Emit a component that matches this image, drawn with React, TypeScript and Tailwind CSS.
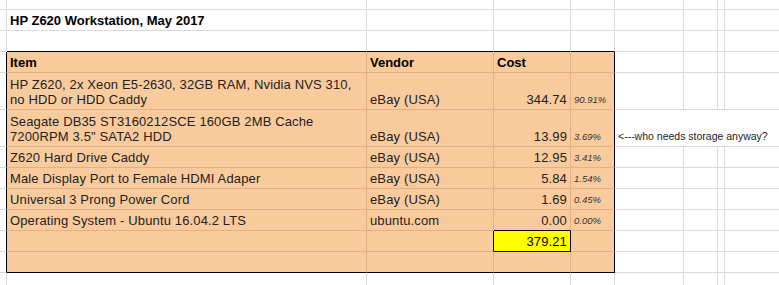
import React from "react";

const grid =
  "grid grid-cols-[7px_360px_127px_77px_44px_69px_34px_7px_1fr] text-[13px] tracking-[0.14px] text-[#222]";
const base =
  "flex items-end overflow-visible whitespace-nowrap border-r border-b px-[3px] pb-[2px] leading-[15px]";
const plain = "border-[#dadada]";
const orange = "bg-[#f9cb9c] border-[#e2b085]";

type Item = {
  item: string[];
  vendor: string;
  cost: string;
  pct: string;
  note?: string;
};

const items: Item[] = [
  {
    item: ["HP Z620, 2x Xeon E5-2630, 32GB RAM, Nvidia NVS 310,", "no HDD or HDD Caddy"],
    vendor: "eBay (USA)",
    cost: "344.74",
    pct: "90.91%",
  },
  {
    item: ["Seagate DB35 ST3160212SCE 160GB 2MB Cache", '7200RPM 3.5" SATA2 HDD'],
    vendor: "eBay (USA)",
    cost: "13.99",
    pct: "3.69%",
    note: "<---who needs storage anyway?",
  },
  { item: ["Z620 Hard Drive Caddy"], vendor: "eBay (USA)", cost: "12.95", pct: "3.41%" },
  { item: ["Male Display Port to Female HDMI Adaper"], vendor: "eBay (USA)", cost: "5.84", pct: "1.54%" },
  { item: ["Universal 3 Prong Power Cord"], vendor: "eBay (USA)", cost: "1.69", pct: "0.45%" },
  { item: ["Operating System - Ubuntu 16.04.2 LTS"], vendor: "ubuntu.com", cost: "0.00", pct: "0.00%" },
];

function Cell({ className = "", children }: { className?: string; children?: React.ReactNode }) {
  return <div className={`${base} ${className}`}>{children}</div>;
}

function PlainTail() {
  return (
    <>
      <Cell className={plain} />
      <Cell className={plain} />
      <Cell className={plain} />
      <Cell className={`${plain} border-r-0`} />
    </>
  );
}

export default function App() {
  return (
    <div className="h-[285px] w-[779px] overflow-hidden bg-white font-['Liberation_Sans',Arial,sans-serif]">
      {/* top partial row */}
      <div className={`${grid} h-[10px]`}>
        <Cell className={plain} />
        <Cell className={plain} />
        <Cell className={plain} />
        <Cell className={plain} />
        <Cell className={plain} />
        <PlainTail />
      </div>

      {/* title */}
      <div className={`${grid} h-[21px]`}>
        <Cell className={plain} />
        <Cell className={`${plain} font-bold tracking-normal text-black`}>HP Z620 Workstation, May 2017</Cell>
        <Cell className={plain} />
        <Cell className={plain} />
        <Cell className={plain} />
        <PlainTail />
      </div>

      {/* blank row above table */}
      <div className={`${grid} h-[21px]`}>
        <Cell className={plain} />
        <Cell className={`${plain} border-b-black`} />
        <Cell className={`${plain} border-b-black`} />
        <Cell className={`${plain} border-b-black`} />
        <Cell className={`${plain} border-b-black`} />
        <PlainTail />
      </div>

      {/* header */}
      <div className={`${grid} h-[21px]`}>
        <Cell className={`${plain} border-r-black`} />
        <Cell className={`${orange} font-bold tracking-normal text-black`}>Item</Cell>
        <Cell className={`${orange} font-bold tracking-normal text-black`}>Vendor</Cell>
        <Cell className={`${orange} font-bold tracking-normal text-black`}>Cost</Cell>
        <Cell className={`${orange} border-r-black`} />
        <PlainTail />
      </div>

      {items.map((r, i) => (
        <div key={i} className={`${grid} ${r.item.length > 1 ? "h-[37px]" : "h-[21px]"}`}>
          <Cell className={`${plain} border-r-black`} />
          <Cell className={orange}>
            <div>
              {r.item.map((line, j) => (
                <div key={j}>{line}</div>
              ))}
            </div>
          </Cell>
          <Cell className={orange}>{r.vendor}</Cell>
          <Cell className={`${orange} justify-end ${i === items.length - 1 ? "border-b-black" : ""}`}>
            {r.cost}
          </Cell>
          <Cell className={`${orange} border-r-black text-[9.5px] italic leading-[10px] tracking-normal text-[#333]`}>
            {r.pct}
          </Cell>
          {r.note ? (
            <div className={`${base} ${plain} col-span-4 border-r-0 text-[10.5px] leading-[10px] tracking-normal`}>
              {r.note}
            </div>
          ) : (
            <PlainTail />
          )}
        </div>
      ))}

      {/* total */}
      <div className={`${grid} h-[21px]`}>
        <Cell className={`${plain} border-r-black`} />
        <Cell className={orange} />
        <Cell className={`${orange} border-r-black`} />
        <Cell className="justify-end border-r-black border-b-black bg-[#ffff00] text-black">379.21</Cell>
        <Cell className={`${orange} border-r-black`} />
        <PlainTail />
      </div>

      {/* blank bottom table row */}
      <div className={`${grid} h-[21px]`}>
        <Cell className={`${plain} border-r-black`} />
        <Cell className={`${orange} border-b-black`} />
        <Cell className={`${orange} border-b-black`} />
        <Cell className={`${orange} border-b-black`} />
        <Cell className={`${orange} border-r-black border-b-black`} />
        <PlainTail />
      </div>

      {/* below */}
      <div className={`${grid} h-[13px]`}>
        <Cell className={plain} />
        <Cell className={plain} />
        <Cell className={plain} />
        <Cell className={plain} />
        <Cell className={plain} />
        <PlainTail />
      </div>
    </div>
  );
}
